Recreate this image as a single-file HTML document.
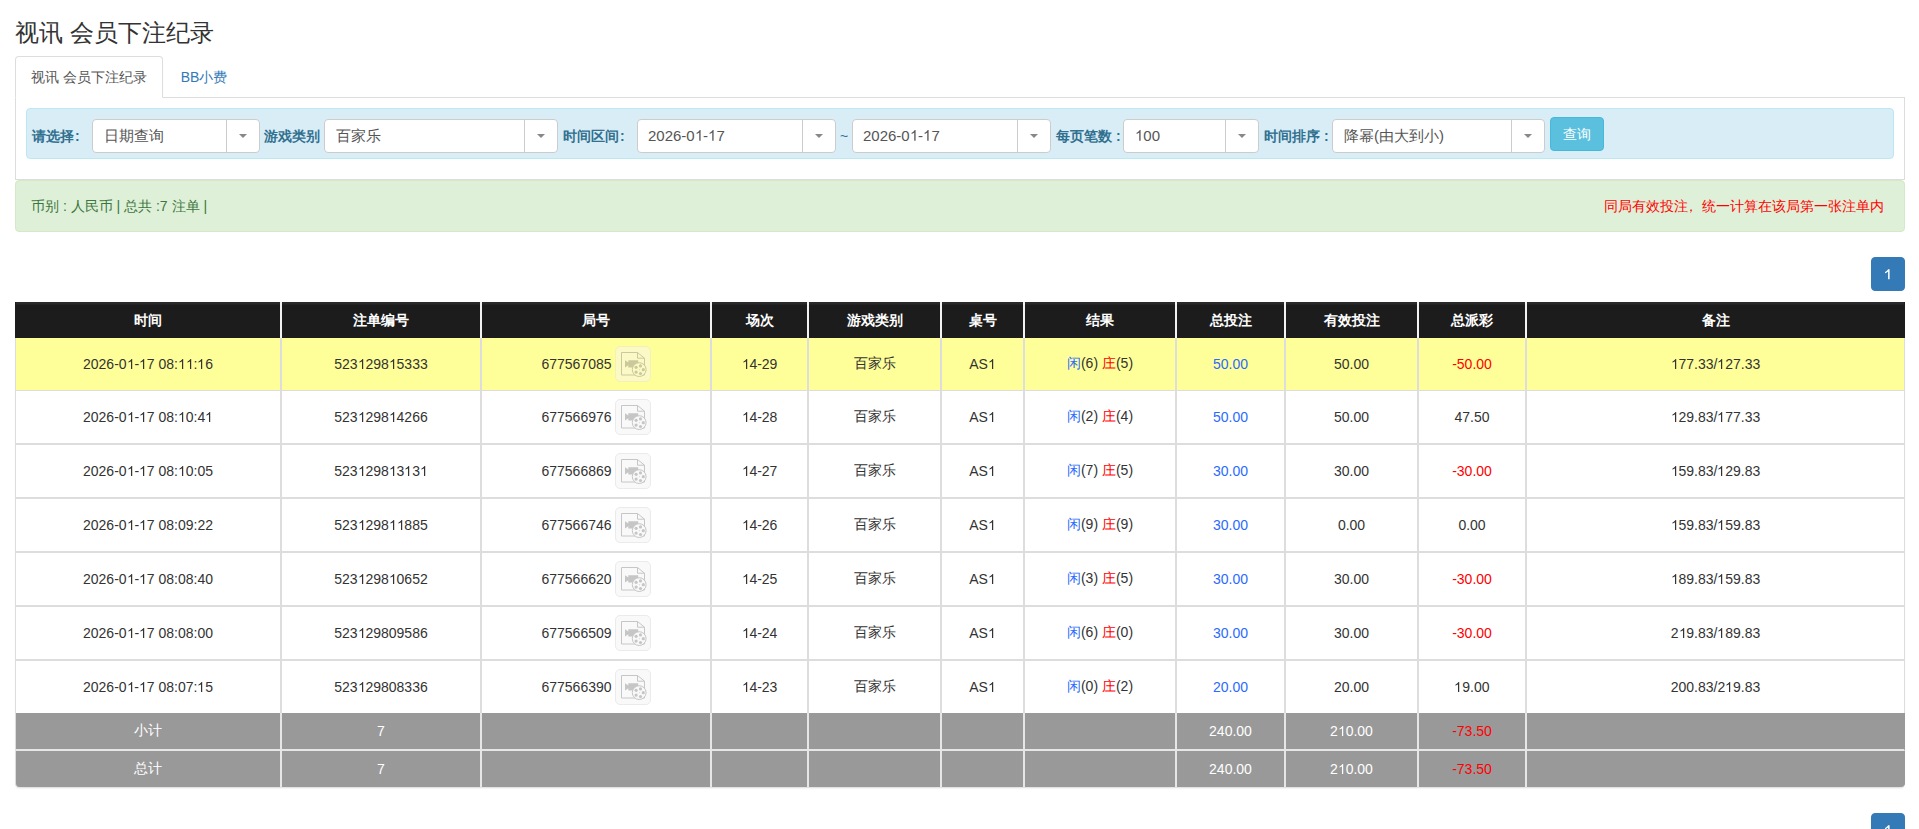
<!DOCTYPE html>
<html><head><meta charset="utf-8">
<style>
*{box-sizing:border-box;}
html,body{margin:0;padding:0;background:#fff;}
body{font-family:"Liberation Sans",sans-serif;font-size:14px;color:#333;width:1919px;height:829px;overflow:hidden;position:relative;}
.abs{position:absolute;}
h3{position:absolute;left:15px;top:18px;margin:0;font-size:24px;font-weight:normal;line-height:30px;color:#333;}
.tab-active{position:absolute;left:15px;top:56px;width:148px;height:42px;border:1px solid #ddd;border-bottom-color:#fff;border-radius:4px 4px 0 0;background:#fff;z-index:2;text-align:center;line-height:40px;color:#555;}
.tab2{position:absolute;left:163px;top:57px;width:82px;height:41px;text-align:center;line-height:40px;color:#337ab7;}
.panel{position:absolute;left:15px;top:97px;width:1890px;height:83px;border:1px solid #ddd;background:#fff;}
.well{position:absolute;left:26px;top:108px;width:1868px;height:51px;background:#d9edf7;border:1px solid #bce8f1;border-radius:4px;}
.lbl{position:absolute;top:119px;height:34px;line-height:34px;font-weight:bold;color:#31708f;white-space:nowrap;}
.sel{position:absolute;top:119px;height:34px;border:1px solid #ccc;border-radius:4px;background:#fff;font-size:15px;color:#555;line-height:32px;padding-left:11px;white-space:nowrap;}
.sel .arr{position:absolute;right:0;top:0;width:33px;height:32px;border-left:1px solid #ccc;}
.sel .arr:after{content:"";position:absolute;left:12px;top:14px;border-left:4px solid transparent;border-right:4px solid transparent;border-top:4px solid #888;}
.btn{position:absolute;left:1550px;top:117px;width:54px;height:34px;background:#5bc0de;border:1px solid #46b8da;border-radius:4px;color:#fff;text-align:center;line-height:32px;}
.alert{position:absolute;left:15px;top:180px;width:1890px;height:52px;background:#dff0d8;border:1px solid #d6e9c6;border-radius:4px;color:#3c763d;}
.alert .l{position:absolute;left:15px;top:0;line-height:50px;}
.alert .r{position:absolute;right:20px;top:0;line-height:50px;color:#f00;}
.pg{position:absolute;left:1871px;width:34px;height:34px;background:#337ab7;border:1px solid #337ab7;border-radius:4px;color:#fff;text-align:center;line-height:32px;}
table.t{position:absolute;left:15px;top:302px;width:1890px;border-collapse:separate;border-spacing:0;table-layout:fixed;border-radius:0 0 4px 4px;box-shadow:0 2px 2px -1px rgba(0,0,0,.15);}
.t td,.t th{padding:0;text-align:center;vertical-align:middle;border-left:2px solid #ddd;white-space:nowrap;}
.t td:first-child,.t th:first-child{border-left-width:1px;}
.t td:last-child,.t th:last-child{border-right:1px solid #ddd;}
.t th{height:36px;padding-top:2px;background:linear-gradient(#2a2a2a 0,#2a2a2a 2px,#1c1c1c 3px);color:#fff;font-weight:bold;border-left-color:#f2f2f2;}
.t th:first-child{border-left-color:#1c1c1c;}
.t th:last-child{border-right-color:#1c1c1c;}
.t td{height:54px;border-bottom:2px solid #ddd;background:#fff;}
.t tr.hl td{background:#ffff99;height:53px;border-bottom-width:1px;}
.t tbody tr:last-child td{height:52px;border-bottom:0;}
.t tfoot td{background:#999;color:#fff;height:38px;border-left-color:#e6e6e6;border-bottom:2px solid #e6e6e6;}
.t tfoot tr:last-child td{height:36px;border-bottom:0;}
.t tfoot td:first-child{border-left-color:#ddd;}
.t tfoot td:last-child{border-right-color:#999;}
.t tfoot tr:last-child td:first-child{border-bottom-left-radius:4px;}
.t tfoot tr:last-child td:last-child{border-bottom-right-radius:4px;}
.co{margin-left:1px;}
.blue{color:#2a6bff;}
.red,.t tfoot td.red{color:#f00;}
.jh{display:inline-block;vertical-align:middle;}
.vb{display:inline-block;position:relative;vertical-align:middle;width:36px;height:36px;margin-left:3px;border:1px solid #ebebeb;border-radius:5px;background:#f9f9f9;color:#c6c6c6;line-height:0;}
.vb svg{position:absolute;left:5px;top:5px;}
.vb .rb{fill:#f9f9f9;}
.hl .vb .rb{fill:#fbf9c6;}
.hl .vb{color:#cbc99b;border-color:#f3f1b8;background:#fbf9c6;}
.d1{display:inline-block;width:0.5562em;height:0.71875em;vertical-align:baseline;overflow:visible;}
</style></head><body>
<h3>视讯 会员下注纪录</h3>
<div class="panel"></div>
<div class="tab-active">视讯 会员下注纪录</div>
<div class="tab2">BB小费</div>
<div class="well"></div>
<div class="lbl" style="left:32px">请选择<span class="co">:</span></div>
<div class="sel" style="left:92px;width:168px">日期查询<span class="arr"></span></div>
<div class="lbl" style="left:264px">游戏类别</div>
<div class="sel" style="left:324px;width:234px">百家乐<span class="arr"></span></div>
<div class="lbl" style="left:563px">时间区间<span class="co">:</span></div>
<div class="sel" style="left:637px;width:199px;padding-left:10px">2026-0<svg class="d1" viewBox="0 -1472 1139 1472"><path d="M763 0H583V-1147Q518 -1085 412 -1023T222 -930V-1104Q372 -1175 485 -1276T645 -1472H763Z" fill="currentColor"/></svg>-<svg class="d1" viewBox="0 -1472 1139 1472"><path d="M763 0H583V-1147Q518 -1085 412 -1023T222 -930V-1104Q372 -1175 485 -1276T645 -1472H763Z" fill="currentColor"/></svg>7<span class="arr"></span></div>
<div class="abs" style="left:840px;top:119px;line-height:34px;color:#31708f">~</div>
<div class="sel" style="left:852px;width:199px;padding-left:10px">2026-0<svg class="d1" viewBox="0 -1472 1139 1472"><path d="M763 0H583V-1147Q518 -1085 412 -1023T222 -930V-1104Q372 -1175 485 -1276T645 -1472H763Z" fill="currentColor"/></svg>-<svg class="d1" viewBox="0 -1472 1139 1472"><path d="M763 0H583V-1147Q518 -1085 412 -1023T222 -930V-1104Q372 -1175 485 -1276T645 -1472H763Z" fill="currentColor"/></svg>7<span class="arr"></span></div>
<div class="lbl" style="left:1056px">每页笔数 :</div>
<div class="sel" style="left:1123px;width:136px;padding-left:11px"><svg class="d1" viewBox="0 -1472 1139 1472"><path d="M763 0H583V-1147Q518 -1085 412 -1023T222 -930V-1104Q372 -1175 485 -1276T645 -1472H763Z" fill="currentColor"/></svg>00<span class="arr"></span></div>
<div class="lbl" style="left:1264px">时间排序 :</div>
<div class="sel" style="left:1332px;width:213px">降幂(由大到小)<span class="arr"></span></div>
<div class="btn">查询</div>
<div class="alert"><span class="l">币别 : 人民币 | 总共 :7 注单 |</span><span class="r">同局有效投注<span style="position:relative;left:-4px">，</span>统一计算在该局第一张注单内</span></div>
<div class="pg" style="top:257px"><svg width="7" height="11" viewBox="0 0 7 11" style="position:absolute;left:12px;top:11px"><path d="M4.1 0.2H5.6V10.3H4.1V2.4C3.4 3.1 2.2 3.9 1.0 4.3V2.9C2.4 2.3 3.6 1.2 4.1 0.2Z" fill="#fff"/></svg></div>
<table class="t">
<colgroup><col style="width:265px"><col style="width:200px"><col style="width:230px"><col style="width:97px"><col style="width:133px"><col style="width:83px"><col style="width:152px"><col style="width:109px"><col style="width:133px"><col style="width:108px"><col style="width:380px"></colgroup>
<thead><tr><th>时间</th><th>注单编号</th><th>局号</th><th>场次</th><th>游戏类别</th><th>桌号</th><th>结果</th><th>总投注</th><th>有效投注</th><th>总派彩</th><th>备注</th></tr></thead>
<tbody>
<tr class="hl"><td>2026-0<svg class="d1" viewBox="0 -1472 1139 1472"><path d="M763 0H583V-1147Q518 -1085 412 -1023T222 -930V-1104Q372 -1175 485 -1276T645 -1472H763Z" fill="currentColor"/></svg>-<svg class="d1" viewBox="0 -1472 1139 1472"><path d="M763 0H583V-1147Q518 -1085 412 -1023T222 -930V-1104Q372 -1175 485 -1276T645 -1472H763Z" fill="currentColor"/></svg>7 08:<svg class="d1" viewBox="0 -1472 1139 1472"><path d="M763 0H583V-1147Q518 -1085 412 -1023T222 -930V-1104Q372 -1175 485 -1276T645 -1472H763Z" fill="currentColor"/></svg><svg class="d1" viewBox="0 -1472 1139 1472"><path d="M763 0H583V-1147Q518 -1085 412 -1023T222 -930V-1104Q372 -1175 485 -1276T645 -1472H763Z" fill="currentColor"/></svg>:<svg class="d1" viewBox="0 -1472 1139 1472"><path d="M763 0H583V-1147Q518 -1085 412 -1023T222 -930V-1104Q372 -1175 485 -1276T645 -1472H763Z" fill="currentColor"/></svg>6</td><td>523<svg class="d1" viewBox="0 -1472 1139 1472"><path d="M763 0H583V-1147Q518 -1085 412 -1023T222 -930V-1104Q372 -1175 485 -1276T645 -1472H763Z" fill="currentColor"/></svg>298<svg class="d1" viewBox="0 -1472 1139 1472"><path d="M763 0H583V-1147Q518 -1085 412 -1023T222 -930V-1104Q372 -1175 485 -1276T645 -1472H763Z" fill="currentColor"/></svg>5333</td><td><span class="jh">677567085</span><span class="vb"><svg width="28" height="28" viewBox="0 0 28 28"><path d="M0.5 0.5H16.5L23.5 6.2V23H0.5Z" fill="none" stroke="currentColor"/><path d="M16.5 0.5V6.2H23.5" fill="none" stroke="currentColor"/><path d="M4 8.3L7.3 10.6V8.3H17.2V15.6H7.3V13.3L4 15.6Z" fill="currentColor"/><circle cx="18.2" cy="17.6" r="6.9" class="rb" stroke="currentColor"/><g fill="currentColor"><circle cx="22.3" cy="17.7" r="1.6"/><circle cx="19.5" cy="21.5" r="1.6"/><circle cx="15.1" cy="20.1" r="1.6"/><circle cx="15.1" cy="15.3" r="1.6"/><circle cx="19.5" cy="13.9" r="1.6"/><circle cx="18.3" cy="17.7" r="0.5"/></g></svg></span></td><td><svg class="d1" viewBox="0 -1472 1139 1472"><path d="M763 0H583V-1147Q518 -1085 412 -1023T222 -930V-1104Q372 -1175 485 -1276T645 -1472H763Z" fill="currentColor"/></svg>4-29</td><td>百家乐</td><td>AS<svg class="d1" viewBox="0 -1472 1139 1472"><path d="M763 0H583V-1147Q518 -1085 412 -1023T222 -930V-1104Q372 -1175 485 -1276T645 -1472H763Z" fill="currentColor"/></svg></td><td><span class="blue">闲</span>(6) <span class="red">庄</span>(5)</td><td class="blue">50.00</td><td>50.00</td><td class="red">-50.00</td><td><svg class="d1" viewBox="0 -1472 1139 1472"><path d="M763 0H583V-1147Q518 -1085 412 -1023T222 -930V-1104Q372 -1175 485 -1276T645 -1472H763Z" fill="currentColor"/></svg>77.33/<svg class="d1" viewBox="0 -1472 1139 1472"><path d="M763 0H583V-1147Q518 -1085 412 -1023T222 -930V-1104Q372 -1175 485 -1276T645 -1472H763Z" fill="currentColor"/></svg>27.33</td></tr>
<tr><td>2026-0<svg class="d1" viewBox="0 -1472 1139 1472"><path d="M763 0H583V-1147Q518 -1085 412 -1023T222 -930V-1104Q372 -1175 485 -1276T645 -1472H763Z" fill="currentColor"/></svg>-<svg class="d1" viewBox="0 -1472 1139 1472"><path d="M763 0H583V-1147Q518 -1085 412 -1023T222 -930V-1104Q372 -1175 485 -1276T645 -1472H763Z" fill="currentColor"/></svg>7 08:<svg class="d1" viewBox="0 -1472 1139 1472"><path d="M763 0H583V-1147Q518 -1085 412 -1023T222 -930V-1104Q372 -1175 485 -1276T645 -1472H763Z" fill="currentColor"/></svg>0:4<svg class="d1" viewBox="0 -1472 1139 1472"><path d="M763 0H583V-1147Q518 -1085 412 -1023T222 -930V-1104Q372 -1175 485 -1276T645 -1472H763Z" fill="currentColor"/></svg></td><td>523<svg class="d1" viewBox="0 -1472 1139 1472"><path d="M763 0H583V-1147Q518 -1085 412 -1023T222 -930V-1104Q372 -1175 485 -1276T645 -1472H763Z" fill="currentColor"/></svg>298<svg class="d1" viewBox="0 -1472 1139 1472"><path d="M763 0H583V-1147Q518 -1085 412 -1023T222 -930V-1104Q372 -1175 485 -1276T645 -1472H763Z" fill="currentColor"/></svg>4266</td><td><span class="jh">677566976</span><span class="vb"><svg width="28" height="28" viewBox="0 0 28 28"><path d="M0.5 0.5H16.5L23.5 6.2V23H0.5Z" fill="none" stroke="currentColor"/><path d="M16.5 0.5V6.2H23.5" fill="none" stroke="currentColor"/><path d="M4 8.3L7.3 10.6V8.3H17.2V15.6H7.3V13.3L4 15.6Z" fill="currentColor"/><circle cx="18.2" cy="17.6" r="6.9" class="rb" stroke="currentColor"/><g fill="currentColor"><circle cx="22.3" cy="17.7" r="1.6"/><circle cx="19.5" cy="21.5" r="1.6"/><circle cx="15.1" cy="20.1" r="1.6"/><circle cx="15.1" cy="15.3" r="1.6"/><circle cx="19.5" cy="13.9" r="1.6"/><circle cx="18.3" cy="17.7" r="0.5"/></g></svg></span></td><td><svg class="d1" viewBox="0 -1472 1139 1472"><path d="M763 0H583V-1147Q518 -1085 412 -1023T222 -930V-1104Q372 -1175 485 -1276T645 -1472H763Z" fill="currentColor"/></svg>4-28</td><td>百家乐</td><td>AS<svg class="d1" viewBox="0 -1472 1139 1472"><path d="M763 0H583V-1147Q518 -1085 412 -1023T222 -930V-1104Q372 -1175 485 -1276T645 -1472H763Z" fill="currentColor"/></svg></td><td><span class="blue">闲</span>(2) <span class="red">庄</span>(4)</td><td class="blue">50.00</td><td>50.00</td><td>47.50</td><td><svg class="d1" viewBox="0 -1472 1139 1472"><path d="M763 0H583V-1147Q518 -1085 412 -1023T222 -930V-1104Q372 -1175 485 -1276T645 -1472H763Z" fill="currentColor"/></svg>29.83/<svg class="d1" viewBox="0 -1472 1139 1472"><path d="M763 0H583V-1147Q518 -1085 412 -1023T222 -930V-1104Q372 -1175 485 -1276T645 -1472H763Z" fill="currentColor"/></svg>77.33</td></tr>
<tr><td>2026-0<svg class="d1" viewBox="0 -1472 1139 1472"><path d="M763 0H583V-1147Q518 -1085 412 -1023T222 -930V-1104Q372 -1175 485 -1276T645 -1472H763Z" fill="currentColor"/></svg>-<svg class="d1" viewBox="0 -1472 1139 1472"><path d="M763 0H583V-1147Q518 -1085 412 -1023T222 -930V-1104Q372 -1175 485 -1276T645 -1472H763Z" fill="currentColor"/></svg>7 08:<svg class="d1" viewBox="0 -1472 1139 1472"><path d="M763 0H583V-1147Q518 -1085 412 -1023T222 -930V-1104Q372 -1175 485 -1276T645 -1472H763Z" fill="currentColor"/></svg>0:05</td><td>523<svg class="d1" viewBox="0 -1472 1139 1472"><path d="M763 0H583V-1147Q518 -1085 412 -1023T222 -930V-1104Q372 -1175 485 -1276T645 -1472H763Z" fill="currentColor"/></svg>298<svg class="d1" viewBox="0 -1472 1139 1472"><path d="M763 0H583V-1147Q518 -1085 412 -1023T222 -930V-1104Q372 -1175 485 -1276T645 -1472H763Z" fill="currentColor"/></svg>3<svg class="d1" viewBox="0 -1472 1139 1472"><path d="M763 0H583V-1147Q518 -1085 412 -1023T222 -930V-1104Q372 -1175 485 -1276T645 -1472H763Z" fill="currentColor"/></svg>3<svg class="d1" viewBox="0 -1472 1139 1472"><path d="M763 0H583V-1147Q518 -1085 412 -1023T222 -930V-1104Q372 -1175 485 -1276T645 -1472H763Z" fill="currentColor"/></svg></td><td><span class="jh">677566869</span><span class="vb"><svg width="28" height="28" viewBox="0 0 28 28"><path d="M0.5 0.5H16.5L23.5 6.2V23H0.5Z" fill="none" stroke="currentColor"/><path d="M16.5 0.5V6.2H23.5" fill="none" stroke="currentColor"/><path d="M4 8.3L7.3 10.6V8.3H17.2V15.6H7.3V13.3L4 15.6Z" fill="currentColor"/><circle cx="18.2" cy="17.6" r="6.9" class="rb" stroke="currentColor"/><g fill="currentColor"><circle cx="22.3" cy="17.7" r="1.6"/><circle cx="19.5" cy="21.5" r="1.6"/><circle cx="15.1" cy="20.1" r="1.6"/><circle cx="15.1" cy="15.3" r="1.6"/><circle cx="19.5" cy="13.9" r="1.6"/><circle cx="18.3" cy="17.7" r="0.5"/></g></svg></span></td><td><svg class="d1" viewBox="0 -1472 1139 1472"><path d="M763 0H583V-1147Q518 -1085 412 -1023T222 -930V-1104Q372 -1175 485 -1276T645 -1472H763Z" fill="currentColor"/></svg>4-27</td><td>百家乐</td><td>AS<svg class="d1" viewBox="0 -1472 1139 1472"><path d="M763 0H583V-1147Q518 -1085 412 -1023T222 -930V-1104Q372 -1175 485 -1276T645 -1472H763Z" fill="currentColor"/></svg></td><td><span class="blue">闲</span>(7) <span class="red">庄</span>(5)</td><td class="blue">30.00</td><td>30.00</td><td class="red">-30.00</td><td><svg class="d1" viewBox="0 -1472 1139 1472"><path d="M763 0H583V-1147Q518 -1085 412 -1023T222 -930V-1104Q372 -1175 485 -1276T645 -1472H763Z" fill="currentColor"/></svg>59.83/<svg class="d1" viewBox="0 -1472 1139 1472"><path d="M763 0H583V-1147Q518 -1085 412 -1023T222 -930V-1104Q372 -1175 485 -1276T645 -1472H763Z" fill="currentColor"/></svg>29.83</td></tr>
<tr><td>2026-0<svg class="d1" viewBox="0 -1472 1139 1472"><path d="M763 0H583V-1147Q518 -1085 412 -1023T222 -930V-1104Q372 -1175 485 -1276T645 -1472H763Z" fill="currentColor"/></svg>-<svg class="d1" viewBox="0 -1472 1139 1472"><path d="M763 0H583V-1147Q518 -1085 412 -1023T222 -930V-1104Q372 -1175 485 -1276T645 -1472H763Z" fill="currentColor"/></svg>7 08:09:22</td><td>523<svg class="d1" viewBox="0 -1472 1139 1472"><path d="M763 0H583V-1147Q518 -1085 412 -1023T222 -930V-1104Q372 -1175 485 -1276T645 -1472H763Z" fill="currentColor"/></svg>298<svg class="d1" viewBox="0 -1472 1139 1472"><path d="M763 0H583V-1147Q518 -1085 412 -1023T222 -930V-1104Q372 -1175 485 -1276T645 -1472H763Z" fill="currentColor"/></svg><svg class="d1" viewBox="0 -1472 1139 1472"><path d="M763 0H583V-1147Q518 -1085 412 -1023T222 -930V-1104Q372 -1175 485 -1276T645 -1472H763Z" fill="currentColor"/></svg>885</td><td><span class="jh">677566746</span><span class="vb"><svg width="28" height="28" viewBox="0 0 28 28"><path d="M0.5 0.5H16.5L23.5 6.2V23H0.5Z" fill="none" stroke="currentColor"/><path d="M16.5 0.5V6.2H23.5" fill="none" stroke="currentColor"/><path d="M4 8.3L7.3 10.6V8.3H17.2V15.6H7.3V13.3L4 15.6Z" fill="currentColor"/><circle cx="18.2" cy="17.6" r="6.9" class="rb" stroke="currentColor"/><g fill="currentColor"><circle cx="22.3" cy="17.7" r="1.6"/><circle cx="19.5" cy="21.5" r="1.6"/><circle cx="15.1" cy="20.1" r="1.6"/><circle cx="15.1" cy="15.3" r="1.6"/><circle cx="19.5" cy="13.9" r="1.6"/><circle cx="18.3" cy="17.7" r="0.5"/></g></svg></span></td><td><svg class="d1" viewBox="0 -1472 1139 1472"><path d="M763 0H583V-1147Q518 -1085 412 -1023T222 -930V-1104Q372 -1175 485 -1276T645 -1472H763Z" fill="currentColor"/></svg>4-26</td><td>百家乐</td><td>AS<svg class="d1" viewBox="0 -1472 1139 1472"><path d="M763 0H583V-1147Q518 -1085 412 -1023T222 -930V-1104Q372 -1175 485 -1276T645 -1472H763Z" fill="currentColor"/></svg></td><td><span class="blue">闲</span>(9) <span class="red">庄</span>(9)</td><td class="blue">30.00</td><td>0.00</td><td>0.00</td><td><svg class="d1" viewBox="0 -1472 1139 1472"><path d="M763 0H583V-1147Q518 -1085 412 -1023T222 -930V-1104Q372 -1175 485 -1276T645 -1472H763Z" fill="currentColor"/></svg>59.83/<svg class="d1" viewBox="0 -1472 1139 1472"><path d="M763 0H583V-1147Q518 -1085 412 -1023T222 -930V-1104Q372 -1175 485 -1276T645 -1472H763Z" fill="currentColor"/></svg>59.83</td></tr>
<tr><td>2026-0<svg class="d1" viewBox="0 -1472 1139 1472"><path d="M763 0H583V-1147Q518 -1085 412 -1023T222 -930V-1104Q372 -1175 485 -1276T645 -1472H763Z" fill="currentColor"/></svg>-<svg class="d1" viewBox="0 -1472 1139 1472"><path d="M763 0H583V-1147Q518 -1085 412 -1023T222 -930V-1104Q372 -1175 485 -1276T645 -1472H763Z" fill="currentColor"/></svg>7 08:08:40</td><td>523<svg class="d1" viewBox="0 -1472 1139 1472"><path d="M763 0H583V-1147Q518 -1085 412 -1023T222 -930V-1104Q372 -1175 485 -1276T645 -1472H763Z" fill="currentColor"/></svg>298<svg class="d1" viewBox="0 -1472 1139 1472"><path d="M763 0H583V-1147Q518 -1085 412 -1023T222 -930V-1104Q372 -1175 485 -1276T645 -1472H763Z" fill="currentColor"/></svg>0652</td><td><span class="jh">677566620</span><span class="vb"><svg width="28" height="28" viewBox="0 0 28 28"><path d="M0.5 0.5H16.5L23.5 6.2V23H0.5Z" fill="none" stroke="currentColor"/><path d="M16.5 0.5V6.2H23.5" fill="none" stroke="currentColor"/><path d="M4 8.3L7.3 10.6V8.3H17.2V15.6H7.3V13.3L4 15.6Z" fill="currentColor"/><circle cx="18.2" cy="17.6" r="6.9" class="rb" stroke="currentColor"/><g fill="currentColor"><circle cx="22.3" cy="17.7" r="1.6"/><circle cx="19.5" cy="21.5" r="1.6"/><circle cx="15.1" cy="20.1" r="1.6"/><circle cx="15.1" cy="15.3" r="1.6"/><circle cx="19.5" cy="13.9" r="1.6"/><circle cx="18.3" cy="17.7" r="0.5"/></g></svg></span></td><td><svg class="d1" viewBox="0 -1472 1139 1472"><path d="M763 0H583V-1147Q518 -1085 412 -1023T222 -930V-1104Q372 -1175 485 -1276T645 -1472H763Z" fill="currentColor"/></svg>4-25</td><td>百家乐</td><td>AS<svg class="d1" viewBox="0 -1472 1139 1472"><path d="M763 0H583V-1147Q518 -1085 412 -1023T222 -930V-1104Q372 -1175 485 -1276T645 -1472H763Z" fill="currentColor"/></svg></td><td><span class="blue">闲</span>(3) <span class="red">庄</span>(5)</td><td class="blue">30.00</td><td>30.00</td><td class="red">-30.00</td><td><svg class="d1" viewBox="0 -1472 1139 1472"><path d="M763 0H583V-1147Q518 -1085 412 -1023T222 -930V-1104Q372 -1175 485 -1276T645 -1472H763Z" fill="currentColor"/></svg>89.83/<svg class="d1" viewBox="0 -1472 1139 1472"><path d="M763 0H583V-1147Q518 -1085 412 -1023T222 -930V-1104Q372 -1175 485 -1276T645 -1472H763Z" fill="currentColor"/></svg>59.83</td></tr>
<tr><td>2026-0<svg class="d1" viewBox="0 -1472 1139 1472"><path d="M763 0H583V-1147Q518 -1085 412 -1023T222 -930V-1104Q372 -1175 485 -1276T645 -1472H763Z" fill="currentColor"/></svg>-<svg class="d1" viewBox="0 -1472 1139 1472"><path d="M763 0H583V-1147Q518 -1085 412 -1023T222 -930V-1104Q372 -1175 485 -1276T645 -1472H763Z" fill="currentColor"/></svg>7 08:08:00</td><td>523<svg class="d1" viewBox="0 -1472 1139 1472"><path d="M763 0H583V-1147Q518 -1085 412 -1023T222 -930V-1104Q372 -1175 485 -1276T645 -1472H763Z" fill="currentColor"/></svg>29809586</td><td><span class="jh">677566509</span><span class="vb"><svg width="28" height="28" viewBox="0 0 28 28"><path d="M0.5 0.5H16.5L23.5 6.2V23H0.5Z" fill="none" stroke="currentColor"/><path d="M16.5 0.5V6.2H23.5" fill="none" stroke="currentColor"/><path d="M4 8.3L7.3 10.6V8.3H17.2V15.6H7.3V13.3L4 15.6Z" fill="currentColor"/><circle cx="18.2" cy="17.6" r="6.9" class="rb" stroke="currentColor"/><g fill="currentColor"><circle cx="22.3" cy="17.7" r="1.6"/><circle cx="19.5" cy="21.5" r="1.6"/><circle cx="15.1" cy="20.1" r="1.6"/><circle cx="15.1" cy="15.3" r="1.6"/><circle cx="19.5" cy="13.9" r="1.6"/><circle cx="18.3" cy="17.7" r="0.5"/></g></svg></span></td><td><svg class="d1" viewBox="0 -1472 1139 1472"><path d="M763 0H583V-1147Q518 -1085 412 -1023T222 -930V-1104Q372 -1175 485 -1276T645 -1472H763Z" fill="currentColor"/></svg>4-24</td><td>百家乐</td><td>AS<svg class="d1" viewBox="0 -1472 1139 1472"><path d="M763 0H583V-1147Q518 -1085 412 -1023T222 -930V-1104Q372 -1175 485 -1276T645 -1472H763Z" fill="currentColor"/></svg></td><td><span class="blue">闲</span>(6) <span class="red">庄</span>(0)</td><td class="blue">30.00</td><td>30.00</td><td class="red">-30.00</td><td>2<svg class="d1" viewBox="0 -1472 1139 1472"><path d="M763 0H583V-1147Q518 -1085 412 -1023T222 -930V-1104Q372 -1175 485 -1276T645 -1472H763Z" fill="currentColor"/></svg>9.83/<svg class="d1" viewBox="0 -1472 1139 1472"><path d="M763 0H583V-1147Q518 -1085 412 -1023T222 -930V-1104Q372 -1175 485 -1276T645 -1472H763Z" fill="currentColor"/></svg>89.83</td></tr>
<tr><td>2026-0<svg class="d1" viewBox="0 -1472 1139 1472"><path d="M763 0H583V-1147Q518 -1085 412 -1023T222 -930V-1104Q372 -1175 485 -1276T645 -1472H763Z" fill="currentColor"/></svg>-<svg class="d1" viewBox="0 -1472 1139 1472"><path d="M763 0H583V-1147Q518 -1085 412 -1023T222 -930V-1104Q372 -1175 485 -1276T645 -1472H763Z" fill="currentColor"/></svg>7 08:07:<svg class="d1" viewBox="0 -1472 1139 1472"><path d="M763 0H583V-1147Q518 -1085 412 -1023T222 -930V-1104Q372 -1175 485 -1276T645 -1472H763Z" fill="currentColor"/></svg>5</td><td>523<svg class="d1" viewBox="0 -1472 1139 1472"><path d="M763 0H583V-1147Q518 -1085 412 -1023T222 -930V-1104Q372 -1175 485 -1276T645 -1472H763Z" fill="currentColor"/></svg>29808336</td><td><span class="jh">677566390</span><span class="vb"><svg width="28" height="28" viewBox="0 0 28 28"><path d="M0.5 0.5H16.5L23.5 6.2V23H0.5Z" fill="none" stroke="currentColor"/><path d="M16.5 0.5V6.2H23.5" fill="none" stroke="currentColor"/><path d="M4 8.3L7.3 10.6V8.3H17.2V15.6H7.3V13.3L4 15.6Z" fill="currentColor"/><circle cx="18.2" cy="17.6" r="6.9" class="rb" stroke="currentColor"/><g fill="currentColor"><circle cx="22.3" cy="17.7" r="1.6"/><circle cx="19.5" cy="21.5" r="1.6"/><circle cx="15.1" cy="20.1" r="1.6"/><circle cx="15.1" cy="15.3" r="1.6"/><circle cx="19.5" cy="13.9" r="1.6"/><circle cx="18.3" cy="17.7" r="0.5"/></g></svg></span></td><td><svg class="d1" viewBox="0 -1472 1139 1472"><path d="M763 0H583V-1147Q518 -1085 412 -1023T222 -930V-1104Q372 -1175 485 -1276T645 -1472H763Z" fill="currentColor"/></svg>4-23</td><td>百家乐</td><td>AS<svg class="d1" viewBox="0 -1472 1139 1472"><path d="M763 0H583V-1147Q518 -1085 412 -1023T222 -930V-1104Q372 -1175 485 -1276T645 -1472H763Z" fill="currentColor"/></svg></td><td><span class="blue">闲</span>(0) <span class="red">庄</span>(2)</td><td class="blue">20.00</td><td>20.00</td><td><svg class="d1" viewBox="0 -1472 1139 1472"><path d="M763 0H583V-1147Q518 -1085 412 -1023T222 -930V-1104Q372 -1175 485 -1276T645 -1472H763Z" fill="currentColor"/></svg>9.00</td><td>200.83/2<svg class="d1" viewBox="0 -1472 1139 1472"><path d="M763 0H583V-1147Q518 -1085 412 -1023T222 -930V-1104Q372 -1175 485 -1276T645 -1472H763Z" fill="currentColor"/></svg>9.83</td></tr>
</tbody>
<tfoot>
<tr><td>小计</td><td>7</td><td></td><td></td><td></td><td></td><td></td><td>240.00</td><td>2<svg class="d1" viewBox="0 -1472 1139 1472"><path d="M763 0H583V-1147Q518 -1085 412 -1023T222 -930V-1104Q372 -1175 485 -1276T645 -1472H763Z" fill="currentColor"/></svg>0.00</td><td class="red">-73.50</td><td></td></tr>
<tr><td>总计</td><td>7</td><td></td><td></td><td></td><td></td><td></td><td>240.00</td><td>2<svg class="d1" viewBox="0 -1472 1139 1472"><path d="M763 0H583V-1147Q518 -1085 412 -1023T222 -930V-1104Q372 -1175 485 -1276T645 -1472H763Z" fill="currentColor"/></svg>0.00</td><td class="red">-73.50</td><td></td></tr>
</tfoot>
</table>
<div class="pg" style="top:813px"><svg width="7" height="11" viewBox="0 0 7 11" style="position:absolute;left:12px;top:11px"><path d="M4.1 0.2H5.6V10.3H4.1V2.4C3.4 3.1 2.2 3.9 1.0 4.3V2.9C2.4 2.3 3.6 1.2 4.1 0.2Z" fill="#fff"/></svg></div>
</body></html>
